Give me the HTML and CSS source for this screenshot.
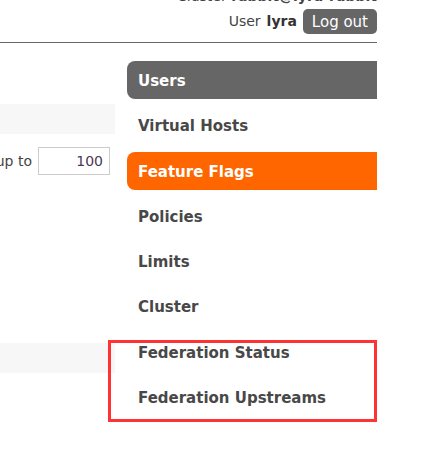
FILE: index.html
```html
<!DOCTYPE html>
<html>
<head>
<meta charset="utf-8">
<link rel="stylesheet" href="styles.css">
</head>
<body>
<div class="page">
  <div class="header">
    <div class="cluster">Cluster <b>rabbit@lyra-rabbit</b></div>
    <div class="user">User <b>lyra</b> <button class="logout">Log out</button></div>
  </div>
  <div class="main">
    <div class="content">
      <div class="band band-top"></div>
      <div class="paging"><span>up to</span><input class="pagesize" type="text" value="100"></div>
      <div class="band band-bottom"></div>
    </div>
    <ul class="menu">
      <li class="item dark">Users</li>
      <li class="item">Virtual Hosts</li>
      <li class="item active">Feature Flags</li>
      <li class="item">Policies</li>
      <li class="item">Limits</li>
      <li class="item">Cluster</li>
      <li class="item">Federation Status</li>
      <li class="item">Federation Upstreams</li>
    </ul>
  </div>
  <div class="highlight"></div>
</div>
</body>
</html>
```
FILE: styles.css
```css
html, body {
  margin: 0;
  padding: 0;
  background: #fff;
}
body {
  font-family: "DejaVu Sans", Verdana, sans-serif;
  color: #444;
  overflow: hidden;
  height: 454px;
}
.page {
  position: relative;
  display: flow-root;
  width: 377px;
}
.header {
  display: flex;
  flex-direction: column;
  align-items: flex-end;
  margin-top: -13px;
  border-bottom: 1px solid #666;
  padding-bottom: 8px;
}
.cluster {
  font-size: 14px;
  line-height: 18px;
  color: #444;
}
.user {
  font-size: 14px;
  line-height: 25px;
  margin-top: 4px;
  display: flex;
  align-items: center;
  gap: 6px;
}
.user b { color: #333; }
.logout {
  font-family: inherit;
  font-size: 15px;
  background: #666;
  color: #fff;
  border: none;
  border-radius: 5px;
  height: 25px;
  padding: 0 9px;
  margin: 0;
}
.main {
  display: flex;
  justify-content: space-between;
  margin-top: 18px;
}
.content {
  width: 115px;
  display: flex;
  flex-direction: column;
}
.band {
  background: #f7f7f7;
  height: 30px;
}
.band-top { margin-top: 43px; }
.paging {
  display: flex;
  justify-content: flex-end;
  align-items: center;
  gap: 6px;
  margin-top: 13px;
  margin-right: 5px;
  font-size: 14px;
  color: #444;
  white-space: nowrap;
}
.pagesize {
  width: 72px;
  height: 28px;
  box-sizing: border-box;
  border: 1px solid #ccc;
  text-align: right;
  font-family: inherit;
  font-size: 14px;
  color: #4a3a55;
  padding: 0 6px;
  margin: 0;
  flex: none;
}
.band-bottom { margin-top: 168px; }
.menu {
  list-style: none;
  margin: 0;
  padding: 0;
  width: 250px;
  display: flex;
  flex-direction: column;
  gap: 7.3px;
}
.item {
  height: 38px;
  line-height: 40px;
  padding-left: 11px;
  font-size: 15px;
  font-weight: bold;
  color: #484848;
  border-radius: 8px 0 0 8px;
  overflow: hidden;
}
.item.dark { background: #666; color: #fff; }
.item.active { background: #f60; color: #fff; }
.highlight {
  position: absolute;
  left: 108px;
  top: 340px;
  width: 263px;
  height: 76px;
  border: 3px solid #f33;
}
```
